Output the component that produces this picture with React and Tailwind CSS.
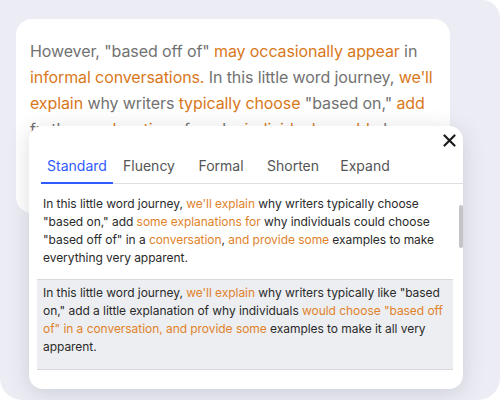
import React from "react";

const O = ({ children, c = "text-[#d9781b]" }) => <span className={c}>{children}</span>;
const P = ({ children }) => <span className="text-[#e0822a]">{children}</span>;

const tabs = ["Standard", "Fluency", "Formal", "Shorten", "Expand"];

export default function App() {
  return (
    <div className="w-[500px] h-[400px] bg-white" style={{ fontFamily: "Inter, 'Noto Sans', sans-serif" }}>
      <div className="relative w-full h-full bg-[#ecedf4] rounded-tr-[18px] rounded-b-[22px] overflow-hidden pt-[19px] pl-[16px]">
        {/* source paragraph card */}
        <div className="w-[434px] h-[194px] bg-white rounded-[16px] overflow-hidden pl-[14px] pr-[10px] pt-[19px]">
          <p className="text-[16px] leading-[26px] tracking-[-0.1px] text-[#727272]">
            However, "based off of" <O>may occasionally appear</O> in <O>informal conversations.</O> In this little word
            journey, <O>we'll explain</O> why writers <O>typically choose</O> "based on," <O>add</O> further{" "}
            <O>explanations</O> for why <O>individuals could</O> choose "based off of" in a conversation.
          </p>
        </div>

        {/* rewrite suggestions popover */}
        <div className="absolute left-[29px] top-[126px] w-[434px] h-[263px] bg-white rounded-[14px] shadow-[0_4px_22px_rgba(40,45,70,0.16)]">
          <button className="absolute top-[7px] right-[7px] w-[14px] h-[14px] flex items-center justify-center">
            <svg width="13" height="13" viewBox="0 0 13 13" fill="none">
              <path d="M1.5 1.5L11.5 11.5M11.5 1.5L1.5 11.5" stroke="#1c1c1c" strokeWidth="2.2" strokeLinecap="round" />
            </svg>
          </button>

          <div className="ml-[12px] mt-[30px] flex border-b border-[#dedfe3]">
            {tabs.map((t, i) => (
              <div
                key={t}
                className={
                  "w-[72px] text-center text-[14px] leading-[20px] pb-[6px] -mb-px border-b-2 " +
                  (i === 0 ? "text-[#2f5bff] border-[#2f5bff]" : "text-[#555555] border-transparent")
                }
              >
                {t}
              </div>
            ))}
          </div>

          <div className="mx-[8px] mr-[10px] text-[12px] leading-[18px] tracking-[-0.05px] text-[#2a2a2a]">
            <div className="px-[6px] pt-[11px] pb-[12px]">
              In this little word journey, <P>we'll explain</P> why writers typically choose "based on," add{" "}
              <P>some explanations for</P> why individuals could choose "based off of" in a <P>conversation</P>,{" "}
              <P>and provide some</P> examples to make everything very apparent.
            </div>
            <div className="px-[6px] pt-[4px] pb-[13px] bg-[#edeef1] border-y border-[#d9dadf]">
              In this little word journey, <P>we'll explain</P> why writers typically like "based on," add a little
              explanation of why individuals <P>would choose "based off of" in a conversation, and provide some</P>{" "}
              examples to make it all very apparent.
            </div>
          </div>

          <div className="absolute left-[430px] top-[79px] w-[4px] h-[43px] rounded-full bg-[#c4c4c6]" />
        </div>
      </div>
    </div>
  );
}
